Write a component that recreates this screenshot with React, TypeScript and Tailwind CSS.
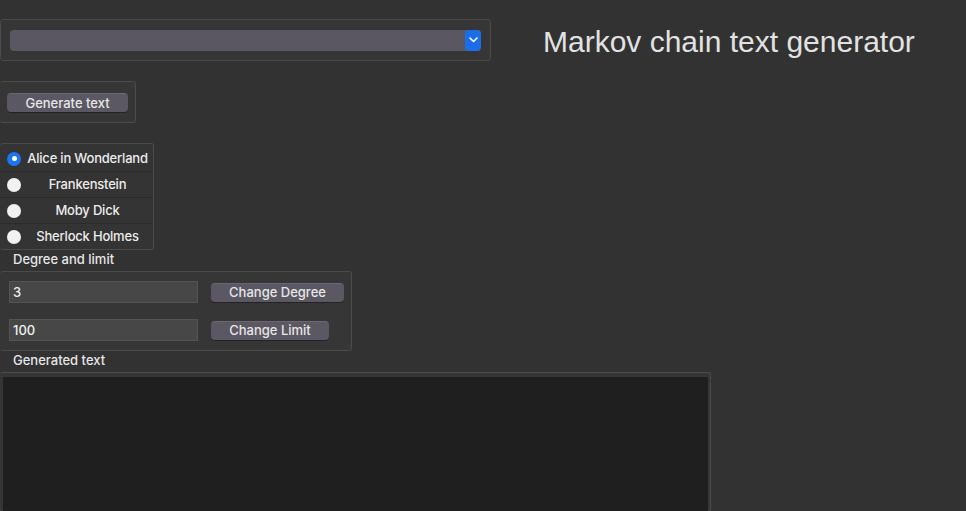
import { useState } from "react";

const books = ["Alice in Wonderland", "Frankenstein", "Moby Dick", "Sherlock Holmes"];

const ui = { fontFamily: "Inter, 'Liberation Sans', sans-serif" };

function Btn({ label, w }: { label: string; w: string }) {
  return (
    <button
      className={`${w} block h-[19px] rounded-[4px] bg-[#5b5863] text-[13px] font-medium leading-none text-[#e6e6e6] shadow-[0_1px_0_rgba(0,0,0,0.35)] border-t border-t-[#6a6770]`}
    >
      {label}
    </button>
  );
}

export default function App() {
  const [book, setBook] = useState(0);

  return (
    <div className="w-[966px] h-[511px] overflow-hidden bg-[#323232] text-[#e8e8e8]" style={ui}>
      <div className="flex items-center pt-[19px]">
        <div className="w-[491px] h-[42px] rounded-[3px] border border-[#4b4b4b] bg-[#363636] flex items-center pl-[9px]">
          <div className="w-[471px] h-[21px] rounded-[4px] bg-[#5a5762] flex justify-end">
            <div className="w-[16px] h-[21px] rounded-[4px] bg-[#1a6ee8] flex items-center justify-center">
              <svg width="9" height="6" viewBox="0 0 9 6" fill="none">
                <path d="M1 1l3.5 3.5L8 1" stroke="white" strokeWidth="1.6" strokeLinecap="round" strokeLinejoin="round" />
              </svg>
            </div>
          </div>
        </div>
        <h1
          className="ml-[52px] mt-[4px] text-[30px] text-[#e2e2e2] leading-none"
          style={{ fontFamily: "'Liberation Sans', Arial, sans-serif" }}
        >
          Markov chain text generator
        </h1>
      </div>

      <div className="mt-[20px] w-[136px] h-[42px] rounded-[3px] border border-[#4b4b4b] border-l-0 bg-[#363636] pl-[7px] pt-[11px]">
        <Btn label="Generate text" w="w-[121px]" />
      </div>

      <div className="mt-[20px] w-[154px] h-[107px] rounded-[3px] border border-[#4b4b4b] border-l-0 bg-[#343434] pt-[2px]">
        {books.map((b, i) => (
          <div
            key={b}
            onClick={() => setBook(i)}
            className={`flex items-center h-[26px] ${i < 3 ? "border-b border-[#2a2a2a]" : ""}`}
          >
            <div className="w-[22px] flex justify-center pl-[6px]">
              {i === book ? (
                <div className="w-[14px] h-[14px] rounded-full bg-[#1b74f0] flex items-center justify-center">
                  <div className="w-[5px] h-[5px] rounded-full bg-white" />
                </div>
              ) : (
                <div className="w-[14px] h-[14px] rounded-full bg-[#f2f2f2]" />
              )}
            </div>
            <span className="flex-1 text-center text-[13px] font-medium text-[#ececec] tracking-[-0.2px]">{b}</span>
          </div>
        ))}
      </div>

      <div className="pl-[13px] h-[21px] text-[13px] font-medium leading-[18px] text-[#e6e6e6]">Degree and limit</div>
      <div className="w-[352px] h-[80px] rounded-[3px] border border-[#4b4b4b] border-l-0 bg-[#363636] pl-[9px] pt-[9px] flex flex-col gap-[16px]">
        <div className="flex items-center">
          <div className="w-[189px] h-[22px] bg-[#474747] border border-[#545454] text-[13px] font-medium leading-[20px] pl-[3px] text-[#f0f0f0]">3</div>
          <div className="ml-[13px]">
            <Btn label="Change Degree" w="w-[133px]" />
          </div>
        </div>
        <div className="flex items-center">
          <div className="w-[189px] h-[22px] bg-[#474747] border border-[#545454] text-[13px] font-medium leading-[20px] pl-[3px] text-[#f0f0f0]">100</div>
          <div className="ml-[13px]">
            <Btn label="Change Limit" w="w-[118px]" />
          </div>
        </div>
      </div>

      <div className="pl-[13px] h-[21px] text-[13px] font-medium leading-[18px] text-[#e6e6e6]">Generated text</div>
      <div className="w-[711px] h-[140px] rounded-[3px] border border-[#4b4b4b] border-l-0 bg-[#363636] pl-[3px] pr-[2px] pt-[4px]">
        <div className="w-full h-[135px] bg-[#1f1f1f]" />
      </div>
    </div>
  );
}
